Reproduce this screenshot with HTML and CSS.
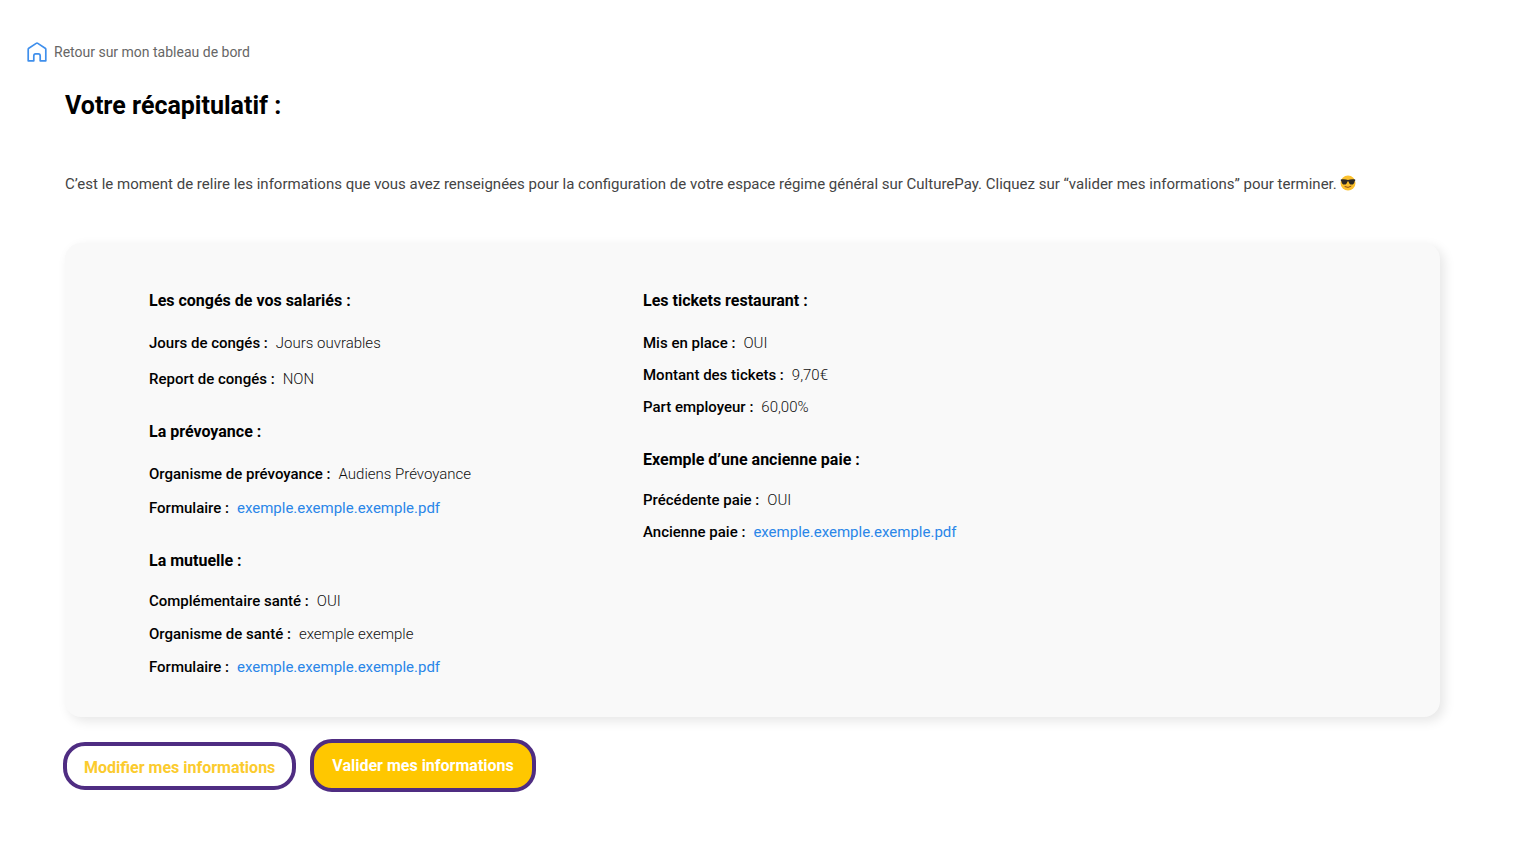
FILE: index.html
```html
<!DOCTYPE html>
<html lang="fr">
<head>
<meta charset="utf-8">
<meta name="viewport" content="width=device-width, initial-scale=1">
<title>Votre récapitulatif</title>
<link rel="stylesheet" href="styles.css">
</head>
<body>
<nav class="topbar">
  <a class="back" href="#">
    <svg class="back-icon" viewBox="0 0 20 20" aria-hidden="true"><path d="M1.200 7.400Q1.200 6.700 1.800 6.200L9.200 1.400Q10 .9 10.800 1.400L18.200 6.200Q18.800 6.700 18.800 7.400V18.800H13.200V14Q13.200 11.800 11.400 11.800H8.600Q6.800 11.800 6.800 14V18.800H1.200Z" fill="none" stroke="#3f8fec" stroke-width="1.700" stroke-linejoin="round"/></svg>
    <span>Retour sur mon tableau de bord</span>
  </a>
</nav>
<main class="page">
  <h1 class="title">Votre récapitulatif :</h1>
  <p class="intro">C’est le moment de relire les informations que vous avez renseignées pour la configuration de votre espace régime général sur CulturePay. Cliquez sur “valider mes informations” pour terminer. <svg class="emoji" viewBox="0 0 16 16" role="img" aria-label="Visage avec lunettes de soleil"><circle cx="8" cy="8" r="7.500" fill="#fbc02d"/><path d="M.8 4.600C3 3.900 6 4.200 8 5c2-.8 5-1.100 7.200-.4v1.200l-.6.500c-.3 2.500-1.300 3.300-3 3.300-1.800 0-2.600-1.200-3-3.200H7.400C7 8.400 6.200 9.600 4.400 9.600c-1.700 0-2.700-.8-3-3.300l-.6-.5Z" fill="#2d2a26"/><path d="M5 11.700q3.200 1.800 6-.4" fill="none" stroke="#8a4b14" stroke-width="1" stroke-linecap="round"/></svg></p>

  <div class="card">
    <div class="column">
      <section class="group">
        <h2 class="group-title">Les congés de vos salariés :</h2>
        <dl class="rows rows-loose">
          <div class="row"><dt>Jours de congés :</dt><dd>Jours ouvrables</dd></div>
          <div class="row"><dt>Report de congés :</dt><dd>NON</dd></div>
        </dl>
      </section>
      <section class="group">
        <h2 class="group-title">La prévoyance :</h2>
        <dl class="rows">
          <div class="row"><dt>Organisme de prévoyance :</dt><dd>Audiens Prévoyance</dd></div>
          <div class="row"><dt>Formulaire :</dt><dd><a class="file" href="#">exemple.exemple.exemple.pdf</a></dd></div>
        </dl>
      </section>
      <section class="group group-close">
        <h2 class="group-title">La mutuelle :</h2>
        <dl class="rows">
          <div class="row"><dt>Complémentaire santé :</dt><dd>OUI</dd></div>
          <div class="row"><dt>Organisme de santé :</dt><dd>exemple exemple</dd></div>
          <div class="row"><dt>Formulaire :</dt><dd><a class="file" href="#">exemple.exemple.exemple.pdf</a></dd></div>
        </dl>
      </section>
    </div>
    <div class="column">
      <section class="group">
        <h2 class="group-title">Les tickets restaurant :</h2>
        <dl class="rows rows-tight">
          <div class="row"><dt>Mis en place :</dt><dd>OUI</dd></div>
          <div class="row"><dt>Montant des tickets :</dt><dd>9,70€</dd></div>
          <div class="row"><dt>Part employeur :</dt><dd>60,00%</dd></div>
        </dl>
      </section>
      <section class="group group-close">
        <h2 class="group-title">Exemple d’une ancienne paie :</h2>
        <dl class="rows rows-tight">
          <div class="row"><dt>Précédente paie :</dt><dd>OUI</dd></div>
          <div class="row"><dt>Ancienne paie :</dt><dd><a class="file" href="#">exemple.exemple.exemple.pdf</a></dd></div>
        </dl>
      </section>
    </div>
  </div>

  <div class="actions">
    <button class="btn btn-outline" type="button">Modifier mes informations</button>
    <button class="btn btn-solid" type="button">Valider mes informations</button>
  </div>
</main>
</body>
</html>
```

FILE: styles.css
```css
* { box-sizing: border-box; }

body {
  margin: 0;
  background: #fff;
  color: #000;
  font: 15px/20px Roboto, "Liberation Sans", sans-serif;
}

h1, h2, p, dl, dd { margin: 0; }

.topbar { display: flex; padding: 42px 27px 0; }

.back {
  display: inline-flex;
  align-items: center;
  gap: 7px;
  color: #666;
  font-size: 14px;
  text-decoration: none;
}

.back-icon { width: 20px; height: 20px; }

.page { padding: 28px 79px 32px 65px; }

.title { font-size: 25px; line-height: 32px; font-weight: 700; }

.intro { margin-top: 52px; color: #444; line-height: 20px; }

.emoji { width: 16px; height: 16px; vertical-align: -2px; }

.card {
  display: grid;
  grid-template-columns: 494px 1fr;
  margin-top: 49px;
  padding: 48px 84px 40px;
  border-radius: 16px;
  background: #f9f9f9;
  box-shadow: 4px 4px 12px rgba(0, 0, 0, 0.1);
}

.column { display: flex; flex-direction: column; gap: 33px; }

.group { display: grid; gap: 22px; }
.group-close { gap: 20px; }

.group-title { font-size: 16px; line-height: 20px; font-weight: 700; }

.rows { display: grid; gap: 14px; }
.group-close .rows { gap: 13px; }
.rows-loose { gap: 16px; }
.rows-tight,
.group-close .rows-tight { gap: 12px; }

.row { display: flex; gap: 8px; }
.row dt { font-weight: 500; }
.row dd { color: #111; font-weight: 300; }

.file { color: #2a86e8; font-weight: 400; text-decoration: none; }

.actions { display: flex; align-items: center; gap: 14px; margin: 22px 0 0 -2px; }

.btn {
  border: 4px solid #4f2d82;
  border-radius: 22px;
  padding: 12px 17px 8px;
  font: 700 16px/20px Roboto, "Liberation Sans", sans-serif;
  cursor: pointer;
}

.btn-outline { background: #fff; color: #fbcb2e; }
.btn-solid { padding: 13px 18px 12px; background: #ffc700; color: #fff; }
```
